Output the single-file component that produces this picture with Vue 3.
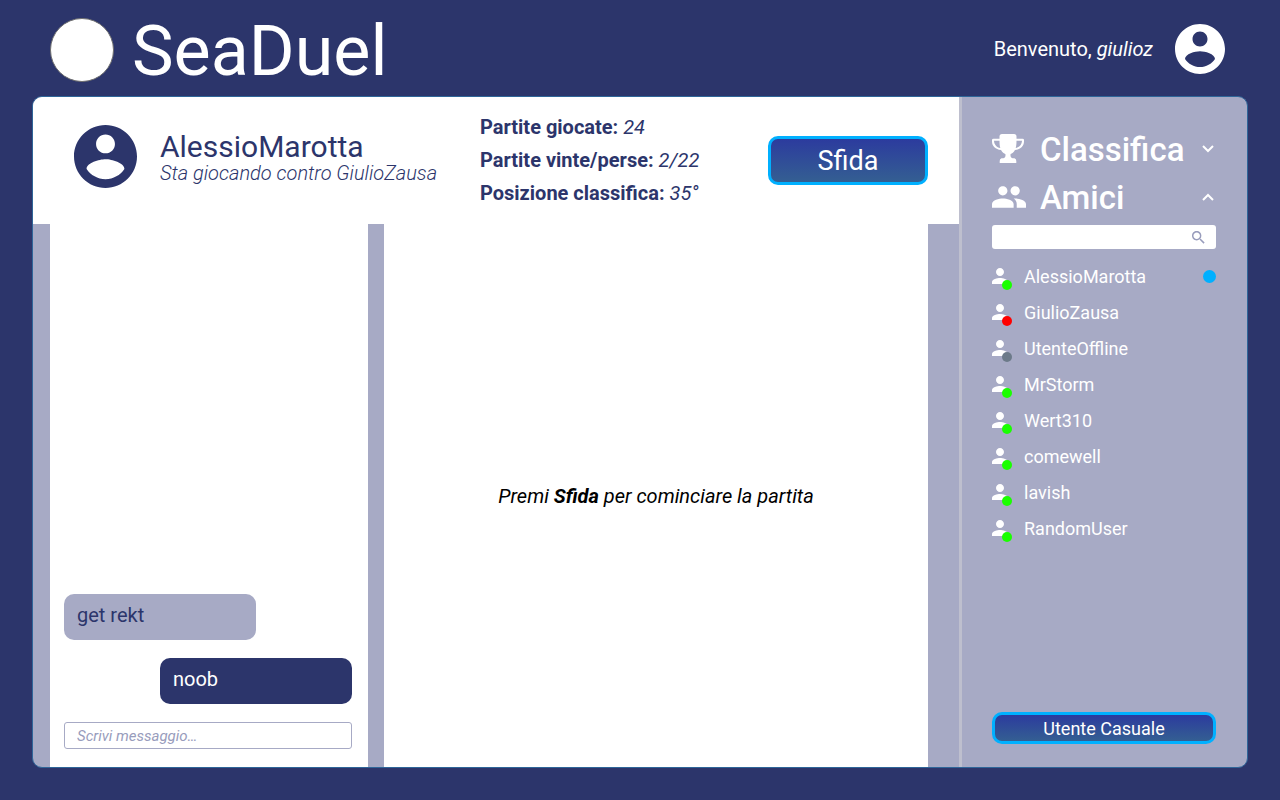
<script setup>
import { ref } from 'vue'

const account =
  'M12 2C6.48 2 2 6.48 2 12s4.48 10 10 10 10-4.48 10-10S17.52 2 12 2zm0 3c1.66 0 3 1.34 3 3s-1.34 3-3 3-3-1.34-3-3 1.34-3 3-3zm0 14.2c-2.5 0-4.71-1.28-6-3.22.03-1.99 4-3.08 6-3.08 1.99 0 5.97 1.09 6 3.08-1.29 1.94-3.5 3.22-6 3.22z'

const stats = [
  { label: 'Partite giocate:', value: '24' },
  { label: 'Partite vinte/perse:', value: '2/22' },
  { label: 'Posizione classifica:', value: '35°' },
]

const messages = [
  { text: 'get rekt', mine: false },
  { text: 'noob', mine: true },
]

const friends = [
  { name: 'AlessioMarotta', status: 'online', unread: true },
  { name: 'GiulioZausa', status: 'busy' },
  { name: 'UtenteOffline', status: 'offline' },
  { name: 'MrStorm', status: 'online' },
  { name: 'Wert310', status: 'online' },
  { name: 'comewell', status: 'online' },
  { name: 'lavish', status: 'online' },
  { name: 'RandomUser', status: 'online' },
]

const draft = ref('')
const query = ref('')
</script>

<template>
  <div class="page">
    <header class="topbar">
      <span class="logo"></span>
      <h1 class="brand">SeaDuel</h1>
      <p class="welcome">Benvenuto, <em>giulioz</em></p>
      <svg class="me" viewBox="2 2 20 20" aria-hidden="true"><path :d="account" /></svg>
    </header>

    <div class="panel">
      <main class="main">
        <section class="profile">
          <svg class="avatar" viewBox="2 2 20 20" aria-hidden="true"><path :d="account" /></svg>
          <div class="identity">
            <h2>AlessioMarotta</h2>
            <p>Sta giocando contro GiulioZausa</p>
          </div>
          <ul class="stats">
            <li v-for="s in stats" :key="s.label"><strong>{{ s.label }}</strong> <em>{{ s.value }}</em></li>
          </ul>
          <button type="button" class="action challenge">Sfida</button>
        </section>

        <div class="columns">
          <section class="chat">
            <p v-for="m in messages" :key="m.text" class="bubble" :class="{ mine: m.mine }">{{ m.text }}</p>
            <input v-model="draft" class="compose" type="text" placeholder="Scrivi messaggio…" aria-label="Scrivi messaggio" />
          </section>
          <section class="board">
            <p>Premi <strong>Sfida</strong> per cominciare la partita</p>
          </section>
        </div>
      </main>

      <aside class="sidebar">
        <button type="button" class="section" aria-expanded="false">
          <svg class="trophy" viewBox="0 0 32 29" aria-hidden="true">
            <path fill-rule="evenodd" d="M10 0h12Q24.500 0 24.500 2.500V4.700H30.500Q32 4.700 32 6V7.500C32 12 28.500 15.500 23 16C21.800 18.300 20 19.400 18.600 20C18.200 22.500 18.800 23.800 20.500 24.300H22.500Q24.300 24.700 24.300 27V29H7.700V27Q7.700 24.700 9.500 24.300H11.500C13.200 23.800 13.800 22.500 13.400 20C12 19.400 10.200 18.300 9 16C3.500 15.500 0 12 0 7.500V6Q0 4.700 1.500 4.700H7.500V2.500Q7.500 0 10 0zM2 6.700C2.200 10.500 4.500 13.300 8.300 14C7.700 12 7.500 9.500 7.500 6.700zM30 6.700H24.500C24.500 9.500 24.300 12 23.700 14C27.500 13.300 29.800 10.500 30 6.700z" />
          </svg>
          <span>Classifica</span>
          <svg class="chevron" viewBox="0 0 12 8" aria-hidden="true"><path d="M1 1l5 5 5-5" /></svg>
        </button>
        <button type="button" class="section" aria-expanded="true">
          <svg class="people" viewBox="1 5 22 14" aria-hidden="true">
            <path d="M16 11c1.660 0 2.990-1.340 2.990-3S17.660 5 16 5c-1.660 0-3 1.340-3 3s1.340 3 3 3zm-8 0c1.660 0 2.990-1.340 2.990-3S9.660 5 8 5C6.340 5 5 6.340 5 8s1.340 3 3 3zm0 2c-2.330 0-7 1.170-7 3.500V19h14v-2.500c0-2.330-4.670-3.500-7-3.500zm8 0c-.29 0-.62.02-.97.05 1.160.84 1.970 1.970 1.970 3.450V19h6v-2.500c0-2.330-4.670-3.500-7-3.500z" />
          </svg>
          <span>Amici</span>
          <svg class="chevron" viewBox="0 0 12 8" aria-hidden="true"><path d="M1 7l5-5 5 5" /></svg>
        </button>

        <label class="search">
          <input v-model="query" type="search" aria-label="Cerca amici" />
          <svg viewBox="3 3 18 18" aria-hidden="true">
            <path d="M15.500 14h-.79l-.28-.27C15.410 12.590 16 11.110 16 9.500 16 5.910 13.090 3 9.500 3S3 5.910 3 9.500 5.910 16 9.500 16c1.610 0 3.090-.59 4.230-1.570l.27.28v.79l5 4.990L20.490 19l-4.990-5zm-6 0C7.010 14 5 11.990 5 9.500S7.010 5 9.500 5 14 7.010 14 9.500 11.990 14 9.500 14z" />
          </svg>
        </label>

        <ul class="friends">
          <li v-for="f in friends" :key="f.name">
            <span class="person">
              <svg viewBox="4 4 16 16" aria-hidden="true">
                <path d="M12 12c2.210 0 4-1.790 4-4s-1.790-4-4-4-4 1.790-4 4 1.790 4 4 4zm0 2c-2.670 0-8 1.340-8 4v2h16v-2c0-2.660-5.330-4-8-4z" />
              </svg>
              <i class="dot" :class="f.status"></i>
            </span>
            <span class="name">{{ f.name }}</span>
            <i v-if="f.unread" class="unread"></i>
          </li>
        </ul>

        <button type="button" class="action random">Utente Casuale</button>
      </aside>
    </div>
  </div>
</template>

<style>
body {
  margin: 0;
  background: #2c356b;
}
</style>

<style scoped>
.page {
  box-sizing: border-box;
  min-height: 100vh;
  padding: 0 32px 32px;
  display: flex;
  flex-direction: column;
  background: #2c356b;
  color: #fff;
  font-family: Roboto, sans-serif;
  font-size: 20px;
}
h1, h2, p, ul {
  margin: 0;
  padding: 0;
  font-weight: 400;
}
ul {
  list-style: none;
}
svg {
  fill: currentColor;
  flex: none;
}
button, input {
  font-family: inherit;
  margin: 0;
}
.topbar {
  box-sizing: border-box;
  height: 96px;
  padding: 2px 23px 0 18px;
  display: flex;
  align-items: center;
}
.logo {
  box-sizing: border-box;
  width: 64px;
  height: 64px;
  margin: 2px 18px 0 0;
  border: 1px solid #707070;
  border-radius: 50%;
  background: #fff;
}
.brand {
  padding-top: 4px;
  font-size: 70px;
  line-height: 90px;
}
.welcome {
  margin-left: auto;
}
.me {
  width: 50px;
  height: 50px;
  margin-left: 22px;
}
.panel {
  flex: 1;
  display: grid;
  grid-template-columns: 1fr 288px;
  border: 1px solid #2f6699;
  border-radius: 10px;
  overflow: hidden;
  background: #a7aac5;
}
.main {
  display: flex;
  flex-direction: column;
}
.profile {
  height: 127px;
  box-sizing: border-box;
  padding: 0 31px 0 41px;
  display: flex;
  align-items: center;
  background: #fff;
  color: #2c356b;
}
.avatar {
  width: 63px;
  height: 63px;
  margin-top: -8px;
}
.identity {
  width: 320px;
  margin: -6px 0 0 23px;
}
.identity h2 {
  font-size: 30px;
  line-height: 30px;
}
.identity p {
  font-weight: 300;
  font-style: italic;
  line-height: 22px;
}
.stats {
  line-height: 33px;
}
.stats em {
  font-weight: 400;
}
.action {
  box-sizing: border-box;
  border: 3px solid #00b0ff;
  border-radius: 10px;
  padding: 0;
  background: linear-gradient(#2c3b9e, #345f92);
  color: #fff;
}
.challenge {
  width: 160px;
  height: 49px;
  margin-left: auto;
  font-size: 27px;
}
.columns {
  flex: 1;
  display: grid;
  grid-template-columns: 318px 1fr;
  gap: 16px;
  padding: 0 31px 0 17px;
}
.chat {
  display: flex;
  flex-direction: column;
  justify-content: flex-end;
  gap: 18px;
  padding: 18px 16px 18px 14px;
  background: #fff;
}
.bubble {
  box-sizing: border-box;
  width: 192px;
  min-height: 46px;
  padding: 9px 13px 13px;
  border-radius: 10px;
  background: #a7aac5;
  color: #2c356b;
  line-height: 24px;
}
.bubble.mine {
  align-self: flex-end;
  background: #2c356b;
  color: #fff;
}
.compose {
  box-sizing: border-box;
  height: 27px;
  padding: 0 12px;
  border: 1px solid #a7aac5;
  border-radius: 3px;
  color: #2c356b;
  font-size: 15px;
}
.compose::placeholder {
  color: #989cbc;
  font-style: italic;
  opacity: 1;
}
.board {
  display: flex;
  align-items: center;
  justify-content: center;
  background: #fff;
  color: #000;
  font-style: italic;
}
.sidebar {
  display: flex;
  flex-direction: column;
  padding: 28px 31px 23px 30px;
  border-left: 3px solid #bebfce;
}
.section {
  height: 48px;
  padding: 0 2px 0 0;
  border: 0;
  background: none;
  color: inherit;
  display: grid;
  grid-template-columns: 48px 1fr auto;
  align-items: center;
  text-align: left;
  font-size: 33px;
  font-weight: 500;
}
.trophy {
  width: 32px;
  height: 29px;
  margin-bottom: 2px;
}
.people {
  width: 34px;
  height: 22px;
}
.chevron {
  width: 12px;
  height: 8px;
  fill: none;
  stroke: currentColor;
  stroke-width: 2;
}
.search {
  display: flex;
  align-items: center;
  height: 24px;
  margin-top: 4px;
  padding: 0 11px 0 8px;
  border-radius: 3px;
  background: #fff;
  color: #989cbc;
}
.search input {
  flex: 1;
  min-width: 0;
  padding: 0;
  border: 0;
  outline: 0;
  background: none;
  color: #2c356b;
  font-size: 15px;
}
.search svg {
  width: 13px;
  height: 13px;
}
.friends {
  margin-top: 9px;
  font-size: 18px;
}
.friends li {
  height: 36px;
  display: flex;
  align-items: center;
}
.person {
  position: relative;
  width: 32px;
  height: 16px;
}
.person svg {
  display: block;
  width: 16px;
  height: 16px;
}
.dot {
  position: absolute;
  left: 10px;
  top: 12px;
  width: 10px;
  height: 10px;
  border-radius: 50%;
}
.online {
  background: #1aff00;
}
.busy {
  background: #ff0000;
}
.offline {
  background: #6c7a89;
}
.unread {
  width: 13px;
  height: 13px;
  margin-left: auto;
  border-radius: 50%;
  background: #00b0ff;
}
.random {
  height: 32px;
  margin-top: auto;
  font-size: 18px;
}
</style>
